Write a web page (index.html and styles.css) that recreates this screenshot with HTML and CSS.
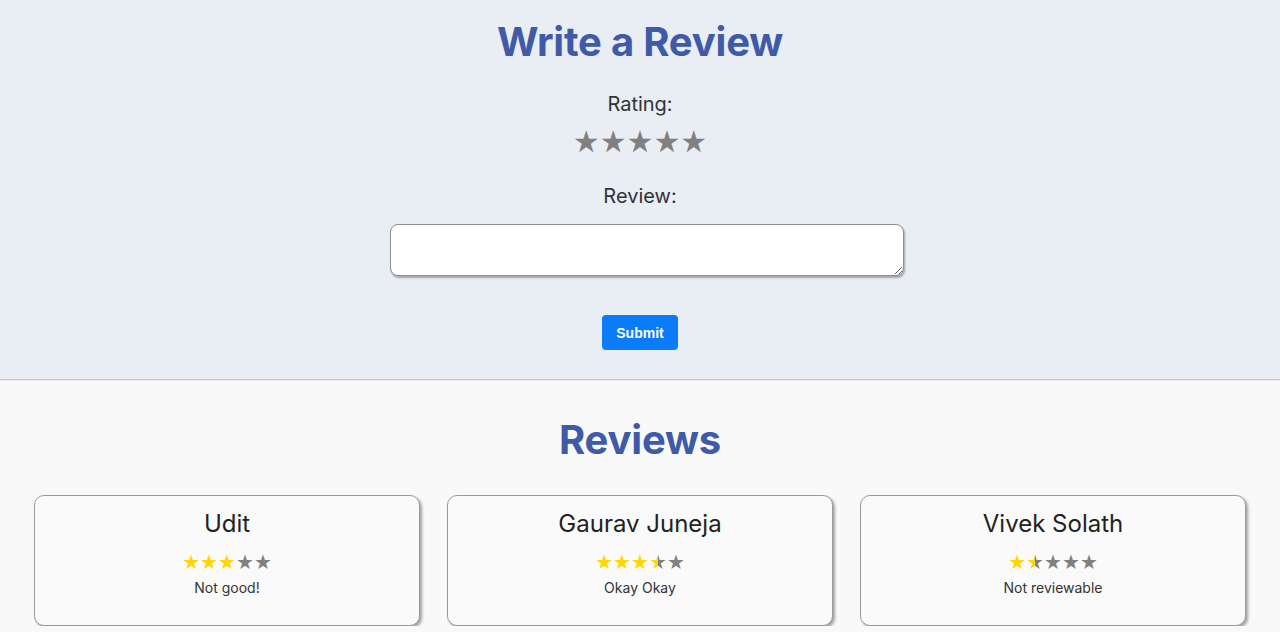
FILE: index.html
```html
<!DOCTYPE html>
<html lang="en">
<head>
<meta charset="utf-8">
<title>Reviews</title>
<link rel="stylesheet" href="styles.css">
</head>
<body>
<section class="write">
  <h1 class="title">Write a Review</h1>
  <div class="label label-rating">Rating:</div>
  <div class="rate-stars"><span>★</span><span>★</span><span>★</span><span>★</span><span>★</span></div>
  <div class="label label-review">Review:</div>
  <textarea class="review-input"></textarea>
  <button class="submit" type="button">Submit</button>
</section>
<section class="list">
  <h2 class="title">Reviews</h2>
  <div class="cards">
    <div class="card">
      <div class="name">Udit</div>
      <div class="stars"><span class="on">★</span><span class="on">★</span><span class="on">★</span><span>★</span><span>★</span></div>
      <div class="text">Not good!</div>
    </div>
    <div class="card">
      <div class="name">Gaurav Juneja</div>
      <div class="stars"><span class="on">★</span><span class="on">★</span><span class="on">★</span><span class="half">★</span><span>★</span></div>
      <div class="text">Okay Okay</div>
    </div>
    <div class="card">
      <div class="name">Vivek Solath</div>
      <div class="stars"><span class="on">★</span><span class="half">★</span><span>★</span><span>★</span><span>★</span></div>
      <div class="text">Not reviewable</div>
    </div>
  </div>
</section>
</body>
</html>
```
FILE: styles.css
```css
* { box-sizing: border-box; }
html, body { margin: 0; padding: 0; }
body {
  font-family: Inter, "Open Sans", "DejaVu Sans", sans-serif;
  background: #f9f9f9;
  color: #333;
}
.write {
  background: #e9edf4;
  height: 380px;
  border-bottom: 1px solid #c4c7cc;
  box-shadow: 0 1px 1px rgba(0,0,0,0.06);
  display: flex;
  flex-direction: column;
  align-items: center;
  padding-top: 18px;
}
.title {
  margin: 0;
  font-size: 40px;
  line-height: 48px;
  font-weight: 700;
  color: #3f5aa6;
  text-align: center;
  letter-spacing: -0.2px;
}
.label {
  font-size: 20px;
  line-height: 24px;
  color: #333;
}
.label-rating { margin-top: 26px; }
.rate-stars {
  font-family: "DejaVu Sans", sans-serif;
  font-size: 30px;
  line-height: 34px;
  color: #808080;
  margin-top: 9px;
}
.label-review { margin-top: 25px; }
.review-input {
  margin-top: 16px;
  margin-left: 14px;
  width: 514px;
  height: 52px;
  border: 1px solid #8f8f8f;
  border-radius: 8px;
  background: #fff;
  box-shadow: 1px 2px 2px rgba(0,0,0,0.3);
  resize: vertical;
  font-family: inherit;
}
.submit {
  margin-top: 39px;
  width: 76px;
  height: 35px;
  border: none;
  border-radius: 4px;
  background: #0a7cf7;
  color: #fff;
  font-family: "Liberation Sans", Arial, sans-serif;
  font-weight: 700;
  font-size: 14px;
  padding: 0;
}
.list {
  padding-top: 36px;
  text-align: center;
}
.cards {
  display: grid;
  grid-template-columns: repeat(3, 1fr);
  gap: 27px;
  padding: 31px 34px 0;
}
.card {
  height: 131px;
  border: 1px solid #9a9a9a;
  border-radius: 10px;
  background: #fafafa;
  box-shadow: 2px 2px 3px rgba(0,0,0,0.35);
  padding-top: 13px;
}
.name {
  font-size: 24px;
  line-height: 30px;
  color: #222;
}
.stars {
  font-family: "DejaVu Sans", sans-serif;
  font-size: 20px;
  line-height: 24px;
  color: #808080;
  margin-top: 11px;
}
.stars .on { color: #ffd700; }
.stars .half {
  background: linear-gradient(90deg, #ffd700 50%, #808080 50%);
  -webkit-background-clip: text;
  background-clip: text;
  color: transparent;
}
.text {
  font-size: 14px;
  line-height: 18px;
  color: #333;
  margin-top: 5px;
}
```
